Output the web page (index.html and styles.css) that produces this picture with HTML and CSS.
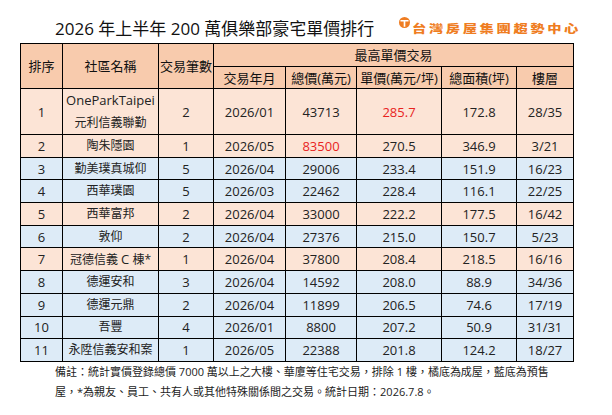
FILE: index.html
```html
<!DOCTYPE html>
<html lang="zh-Hant">
<head>
<meta charset="utf-8">
<title>2026 年上半年 200 萬俱樂部豪宅單價排行</title>
<link rel="stylesheet" href="styles.css">
</head>
<body>
<div class="page">
  <header class="head">
    <h1 class="title">2026 年上半年 200 萬俱樂部豪宅單價排行</h1>
    <div class="logo">
      <svg class="logo-mark" viewBox="0 0 12 12" width="11" height="11" aria-hidden="true">
        <circle cx="6" cy="6" r="6" fill="#ef7d22"/>
        <path d="M1.6 3.2 H10.4 V4.9 H6.9 V10.6 H5.1 V4.9 H1.6 Z" fill="#fff"/>
      </svg>
      <span class="logo-box"><span class="logo-text">台灣房屋集團趨勢中心</span></span>
    </div>
  </header>

  <table class="rank">
    <colgroup>
      <col class="c1"><col class="c2"><col class="c3"><col class="c4">
      <col class="c5"><col class="c6"><col class="c7"><col class="c8">
    </colgroup>
    <thead>
      <tr class="h1">
        <th rowspan="2">排序</th>
        <th rowspan="2">社區名稱</th>
        <th rowspan="2">交易筆數</th>
        <th colspan="5">最高單價交易</th>
      </tr>
      <tr class="h2">
        <th>交易年月</th>
        <th>總價(萬元)</th>
        <th>單價(萬元/坪)</th>
        <th>總面積(坪)</th>
        <th>樓層</th>
      </tr>
    </thead>
    <tbody>
      <tr class="o tall">
        <td>1</td><td class="name"><span class="lat">OneParkTaipei</span><br>元利信義聯勤</td><td>2</td><td>2026/01</td><td>43713</td><td class="red">285.7</td><td>172.8</td><td>28/35</td>
      </tr>
      <tr class="o">
        <td>2</td><td class="name">陶朱隱園</td><td>1</td><td>2026/05</td><td class="red">83500</td><td>270.5</td><td>346.9</td><td>3/21</td>
      </tr>
      <tr class="b">
        <td>3</td><td class="name">勤美璞真城仰</td><td>5</td><td>2026/04</td><td>29006</td><td>233.4</td><td>151.9</td><td>16/23</td>
      </tr>
      <tr class="b">
        <td>4</td><td class="name">西華璞園</td><td>5</td><td>2026/03</td><td>22462</td><td>228.4</td><td>116.1</td><td>22/25</td>
      </tr>
      <tr class="o">
        <td>5</td><td class="name">西華富邦</td><td>2</td><td>2026/04</td><td>33000</td><td>222.2</td><td>177.5</td><td>16/42</td>
      </tr>
      <tr class="b">
        <td>6</td><td class="name">敦仰</td><td>2</td><td>2026/04</td><td>27376</td><td>215.0</td><td>150.7</td><td>5/23</td>
      </tr>
      <tr class="o">
        <td>7</td><td class="name">冠德信義 <span class="lat">C</span> 棟*</td><td>1</td><td>2026/04</td><td>37800</td><td>208.4</td><td>218.5</td><td>16/16</td>
      </tr>
      <tr class="b">
        <td>8</td><td class="name">德運安和</td><td>3</td><td>2026/04</td><td>14592</td><td>208.0</td><td>88.9</td><td>34/36</td>
      </tr>
      <tr class="b">
        <td>9</td><td class="name">德運元鼎</td><td>2</td><td>2026/04</td><td>11899</td><td>206.5</td><td>74.6</td><td>17/19</td>
      </tr>
      <tr class="b">
        <td>10</td><td class="name">吾豐</td><td>4</td><td>2026/01</td><td>8800</td><td>207.2</td><td>50.9</td><td>31/31</td>
      </tr>
      <tr class="b">
        <td>11</td><td class="name">永陞信義安和案</td><td>1</td><td>2026/05</td><td>22388</td><td>201.8</td><td>124.2</td><td>18/27</td>
      </tr>
    </tbody>
  </table>

  <p class="note">備註：統計實價登錄總價 7000 萬以上之大樓、華廈等住宅交易，排除 1 樓，橘底為成屋，藍底為預售<br>屋，*為親友、員工、共有人或其他特殊關係間之交易。統計日期：2026.7.8。</p>
</div>
</body>
</html>
```

FILE: styles.css
```css
html, body {
  margin: 0;
  padding: 0;
  background: #ffffff;
}

.page {
  width: 612px;
  height: 415px;
  font-family: "Open Sans", "Noto Sans CJK TC", sans-serif;
  color: #1a1a1a;
}

.head {
  display: flex;
  align-items: flex-start;
  height: 43px;
  padding-left: 55px;
  box-sizing: border-box;
}

.title {
  margin: 0;
  padding-top: 18px;
  font-size: 17px;
  line-height: 22px;
  font-weight: 400;
  color: #111;
  white-space: nowrap;
}

.logo {
  margin-left: auto;
  margin-right: 31px;
  margin-top: 16px;
  display: flex;
  align-items: center;
  gap: 2px;
  height: 12px;
}

.logo-mark {
  display: block;
  flex: none;
}

.logo-box {
  display: block;
  width: 169px;
  height: 12px;
  overflow: visible;
}

.logo-text {
  display: inline-block;
  font-family: "Noto Sans CJK TC", sans-serif;
  font-weight: 900;
  font-size: 11px;
  line-height: 12px;
  letter-spacing: 2px;
  color: #ef7d22;
  white-space: nowrap;
  transform: scaleX(1.3);
  transform-origin: left center;
}

.rank {
  margin-left: 20px;
  border-collapse: collapse;
  table-layout: fixed;
  width: 553px;
}

.c1 { width: 42px; }
.c2 { width: 96px; }
.c3 { width: 55px; }
.c4 { width: 72px; }
.c5 { width: 71px; }
.c6 { width: 85px; }
.c7 { width: 75px; }
.c8 { width: 57px; }

.rank th,
.rank td {
  border: 1px solid #000;
  padding: 0;
  text-align: center;
  vertical-align: middle;
  white-space: nowrap;
}

.rank th {
  background: #f8cbad;
  font-weight: 400;
  font-size: 13px;
  line-height: 16px;
  color: #111;
}

.rank .h1 th { height: 22px; }
.rank .h2 th { height: 21px; }

.rank td {
  font-size: 13px;
  line-height: 16px;
  height: 21.7px;
  color: #222;
}

.rank .tall td {
  height: 44px;
}

.rank td.name {
  font-size: 12px;
}

.rank .tall td.name {
  line-height: 22px;
}

.rank td .lat {
  font-size: 13px;
}

.rank tr.o td { background: #fce4d6; }
.rank tr.b td { background: #ddebf7; }

.rank td.red { color: #e8231e; }

.note {
  margin: 0;
  padding-left: 55px;
  font-size: 11px;
  line-height: 20px;
  color: #222;
  white-space: nowrap;
}
```
